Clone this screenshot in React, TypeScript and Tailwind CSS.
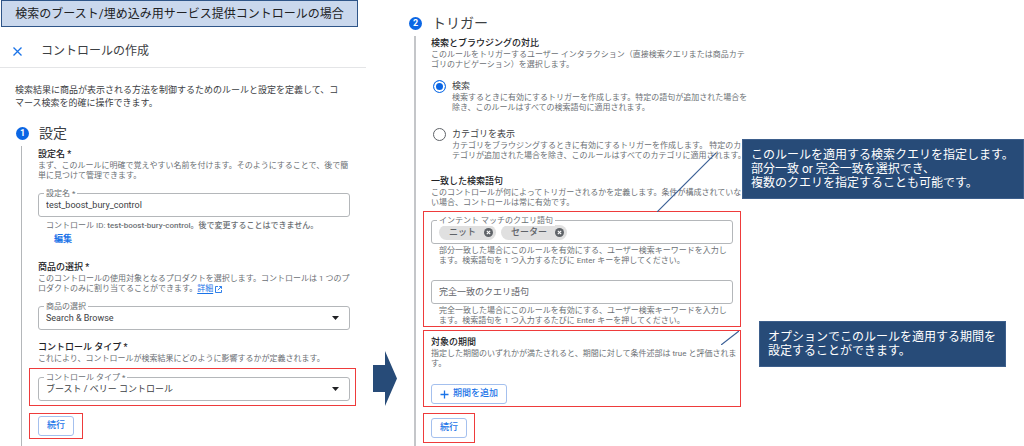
import React, { ReactNode } from 'react';

const StepHeading = ({ number, title }: { number: number; title: string }) => {
  return (
    <h2 className="flex h-4 items-center gap-[10px] text-[14px] leading-4 text-[#3c4043]">
      <span className="flex size-[13px] items-center justify-center rounded-full bg-[#0b66e4] text-[9px] font-bold leading-none text-white">
        {number}
      </span>
      {title}
    </h2>
  );
};

type SectionTextProps = {
  title: string;
  children: ReactNode;
};

const SectionText = ({ title, children }: SectionTextProps) => {
  return (
    <div className="whitespace-nowrap">
      <h3 className="text-[9px] font-medium leading-3 text-[#202124]">{title}</h3>
      <p className="mt-px text-[8px] leading-[10px] text-[#6b6f74]">{children}</p>
    </div>
  );
};

const HelperText = ({ children }: { children: ReactNode }) => {
  return <p className="mt-[2px] whitespace-nowrap pl-2 text-[8px] leading-[10px] text-[#6b6f74]">{children}</p>;
};

type OutlinedFieldProps = {
  id: string;
  label?: string;
  children: ReactNode;
};

const OutlinedField = ({ id, label, children }: OutlinedFieldProps) => {
  return (
    <div className="relative flex h-6 items-center rounded-[3px] border border-[#b4b7ba] px-[7px]">
      {label && (
        <label
          htmlFor={id}
          className="absolute -top-[5px] left-[5px] bg-white px-[2px] text-[8px] leading-[10px] text-[#6b6f74]"
        >
          {label}
        </label>
      )}
      {children}
    </div>
  );
};

const SelectField = ({ id, label, value }: { id: string; label: string; value: string }) => {
  return (
    <OutlinedField id={id} label={label}>
      <select id={id} className="h-3 w-full appearance-none bg-transparent text-[9px] leading-3 text-[#3c4043]">
        <option>{value}</option>
      </select>
      <svg className="pointer-events-none absolute right-[10px] h-1 w-[7px]" viewBox="0 0 7 4" fill="#202124">
        <path d="M0 0h7L3.5 4z" />
      </svg>
    </OutlinedField>
  );
};

const Chip = ({ label }: { label: string }) => {
  return (
    <span className="flex h-[15px] items-center gap-2 rounded-full bg-[#e0e0e0] pl-[10px] pr-[3px] text-[9px] font-medium leading-3 text-[#5f6368]">
      {label}
      <button type="button" aria-label={`${label} を削除`}>
        <svg className="size-[9px]" viewBox="0 0 9 9">
          <circle cx="4.5" cy="4.5" r="4.5" fill="#5f6368" />
          <path d="M2.8 2.8l3.4 3.4M6.2 2.8L2.8 6.2" stroke="#fff" strokeWidth="1.1" />
        </svg>
      </button>
    </span>
  );
};

type RadioOptionProps = {
  id: string;
  label: string;
  checked?: boolean;
  children: ReactNode;
};

const RadioOption = ({ id, label, checked = false, children }: RadioOptionProps) => {
  return (
    <div className="flex items-start gap-[6px] whitespace-nowrap pl-[2px]">
      <input
        type="radio"
        id={id}
        name="trigger"
        defaultChecked={checked}
        className="size-[13px] shrink-0 appearance-none rounded-full border border-[#5f6368] bg-white checked:border-[#1a73e8] checked:bg-[#0b66e4] checked:shadow-[inset_0_0_0_2px_white]"
      />
      <div>
        <label htmlFor={id} className="block text-[9px] leading-3 text-[#3c4043]">
          {label}
        </label>
        <p className="mt-px text-[8px] leading-[10px] text-[#6b6f74]">{children}</p>
      </div>
    </div>
  );
};

const OutlineButton = ({ children }: { children: ReactNode }) => {
  return (
    <button
      type="button"
      className="flex h-5 items-center gap-1 rounded-[3px] border border-[#a4c0ee] bg-white px-2 text-[9px] font-medium text-[#1a73e8]"
    >
      {children}
    </button>
  );
};

const Callout = ({ children }: { children: ReactNode }) => {
  return (
    <p className="whitespace-nowrap border border-[#3d5f8c] bg-[#274b78] px-2 py-2 text-[12px] leading-[14px] text-white">
      {children}
    </p>
  );
};

const App = () => {
  return (
    <main className="grid min-h-screen grid-cols-[minmax(0,366fr)_minmax(0,43fr)_minmax(0,333fr)_minmax(0,282fr)] overflow-hidden bg-white font-['Roboto','Noto_Sans_CJK_JP',sans-serif]">
      <section className="flex flex-col">
        <h1 className="ml-px mr-2 flex h-[27px] items-center justify-center whitespace-nowrap border border-[#2f5588] bg-[#cad8ed] text-[12px] text-[#202124]">
          検索のブースト/埋め込み用サービス提供コントロールの場合
        </h1>
        <header className="flex h-[41px] items-center gap-[19px] border-b border-[#e4e5e7] pl-[13px] pt-2 text-[12px] text-[#3c4043]">
          <button type="button" aria-label="閉じる">
            <svg className="size-[9px]" viewBox="0 0 9 9" stroke="#1a73e8" strokeWidth="1.3">
              <path d="M.5.5l8 8M8.5.5l-8 8" />
            </svg>
          </button>
          コントロールの作成
        </header>
        <p className="mt-4 whitespace-nowrap pl-[15px] text-[9px] leading-[13px] text-[#3c4043]">
          検索結果に商品が表示される方法を制御するためのルールと設定を定義して、コ
          <br />
          マース検索を的確に操作できます。
        </p>

        <div className="mt-[15px] flex grow flex-col pl-4">
          <StepHeading number={1} title="設定" />
          <div className="ml-[5px] mt-[5px] grow border-l border-[#b4b7ba] pl-4 pr-4 pt-[2px]">
            <SectionText title="設定名 *">
              まず、このルールに明確で覚えやすい名前を付けます。そのようにすることで、後で簡
              <br />
              単に見つけて管理できます。
            </SectionText>
            <div className="mt-3">
              <OutlinedField id="name" label="設定名 *">
                <input
                  id="name"
                  type="text"
                  defaultValue="test_boost_bury_control"
                  className="h-3 w-full text-[9px] leading-3 text-[#3c4043]"
                />
              </OutlinedField>
              <div className="pt-[2px]">
                <HelperText>
                  コントロール ID: <span className="font-medium">test-boost-bury-control。後で変更することはできません。</span>
                </HelperText>
              </div>
              <button type="button" className="ml-4 mt-[2px] block text-[9px] font-bold leading-3 text-[#1a73e8]">
                編集
              </button>
            </div>

            <div className="mt-4">
              <SectionText title="商品の選択 *">
                このコントロールの使用対象となるプロダクトを選択します。コントロールは 1 つのプ
                <br />
                ロダクトのみに割り当てることができます。
                <a href="#" className="inline-flex items-center gap-[2px] text-[#1a73e8]">
                  <span className="underline underline-offset-2">詳細</span>
                  <svg className="size-[7px]" viewBox="0 0 7 7" fill="none" stroke="#1a73e8" strokeWidth="0.9">
                    <path d="M3 .5H.5v6h6V4M4.2.5h2.3v2.3M6.5.5L2.8 4.2" />
                  </svg>
                </a>
              </SectionText>
              <div className="mt-3">
                <SelectField id="product" label="商品の選択" value="Search & Browse" />
              </div>
            </div>

            <div className="mt-[11px]">
              <SectionText title="コントロール タイプ *">
                これにより、コントロールが検索結果にどのように影響するかが定義されます。
              </SectionText>
            </div>
            <div className="-ml-[9px] -mr-[6px] mt-1 border border-[#ee3b3b] pb-1 pl-2 pr-[5px] pt-2">
              <SelectField id="type" label="コントロール タイプ *" value="ブースト / ベリー コントロール" />
            </div>
            <div className="-ml-[9px] mt-[7px] w-fit border border-[#ee3b3b] px-2 py-[2px]">
              <OutlineButton>続行</OutlineButton>
            </div>
          </div>
        </div>
      </section>

      <div className="flex pl-[7px] pt-[351px]">
        <svg className="h-[55px] w-6" viewBox="0 0 24 55" fill="#274b78">
          <path d="M0 14h12V0l12 27.500L12 55V41H0z" />
        </svg>
      </div>

      <section className="flex flex-col pt-[15px]">
        <StepHeading number={2} title="トリガー" />
        <div className="ml-[5px] mt-[5px] grow border-l-2 border-[#c4c6c9] pl-[15px] pr-2 pt-px">
          <SectionText title="検索とブラウジングの対比">
            このルールをトリガーするユーザー インタラクション（直接検索クエリまたは商品カテ
            <br />
            ゴリのナビゲーション）を選択します。
          </SectionText>
          <div className="mt-[10px] flex flex-col gap-[15px]">
            <RadioOption id="search" label="検索" checked>
              検索するときに有効にするトリガーを作成します。特定の語句が追加された場合を
              <br />
              除き、このルールはすべての検索語句に適用されます。
            </RadioOption>
            <RadioOption id="category" label="カテゴリを表示">
              カテゴリをブラウジングするときに有効にするトリガーを作成します。 特定のカ
              <br />
              テゴリが追加された場合を除き、このルールはすべてのカテゴリに適用されます。
            </RadioOption>
          </div>
          <div className="mt-[14px]">
            <SectionText title="一致した検索語句">
              このコントロールが何によってトリガーされるかを定義します。条件が構成されていな
              <br />
              い場合、コントロールは常に有効です。
            </SectionText>
          </div>

          <div className="relative -ml-2 -mr-[7px] mt-[3px] border border-[#ee3b3b] px-[7px] pt-2">
            <svg
              className="pointer-events-none absolute bottom-full right-6 size-[59px]"
              viewBox="0 0 59 59"
              stroke="#3a5f96"
              strokeWidth="1.2"
            >
              <path d="M59 0L0 59" />
            </svg>
            <OutlinedField id="partial" label="インテント マッチのクエリ語句">
              <div className="flex w-full items-center gap-[5px]">
                <Chip label="ニット" />
                <Chip label="セーター" />
                <input id="partial" type="text" className="h-3 min-w-0 grow text-[9px]" />
              </div>
            </OutlinedField>
            <HelperText>
              部分一致した場合にこのルールを有効にする、ユーザー検索キーワードを入力し
              <br />
              ます。検索語句を 1 つ入力するたびに Enter キーを押してください。
            </HelperText>
            <div className="mt-[14px]">
              <OutlinedField id="exact">
                <input
                  id="exact"
                  type="text"
                  aria-label="完全一致のクエリ語句"
                  placeholder="完全一致のクエリ語句"
                  className="h-3 w-full text-[9px] leading-3 placeholder:text-[#5f6368]"
                />
              </OutlinedField>
              <HelperText>
                完全一致した場合にこのルールを有効にする、ユーザー検索キーワードを入力し
                <br />
                ます。検索語句を 1 つ入力するたびに Enter キーを押してください。
              </HelperText>
            </div>
          </div>

          <div className="relative -ml-2 -mr-[7px] mt-[3px] border border-[#ee3b3b] px-[7px] pb-[2px] pt-[5px]">
            <svg
              className="pointer-events-none absolute right-px top-0 h-[14px] w-[18px]"
              viewBox="0 0 18 14"
              stroke="#3a5f96"
              strokeWidth="1.2"
            >
              <path d="M18 0L0 14" />
            </svg>
            <SectionText title="対象の期間">
              指定した期間のいずれかが満たされると、期間に対して条件述部は true と評価されま
              <br />
              す。
            </SectionText>
            <div className="mt-[15px]">
              <OutlineButton>
                <svg className="size-[9px]" viewBox="0 0 9 9" stroke="#1a73e8" strokeWidth="1.3">
                  <path d="M4.5.5v8M.5 4.500h8" />
                </svg>
                期間を追加
              </OutlineButton>
            </div>
          </div>

          <div className="-ml-2 mt-[6px] w-fit border border-[#ee3b3b] px-[7px] py-1">
            <OutlineButton>続行</OutlineButton>
          </div>
        </div>
      </section>

      <aside className="flex flex-col gap-[122px] pt-[139px]">
        <Callout>
          このルールを適用する検索クエリを指定します。
          <br />
          部分一致 or 完全一致を選択でき、
          <br />
          複数のクエリを指定することも可能です。
        </Callout>
        <div className="ml-[17px] mr-[18px]">
          <Callout>
            オプションでこのルールを適用する期間を
            <br />
            設定することができます。
          </Callout>
        </div>
      </aside>
    </main>
  );
};

export default App;
